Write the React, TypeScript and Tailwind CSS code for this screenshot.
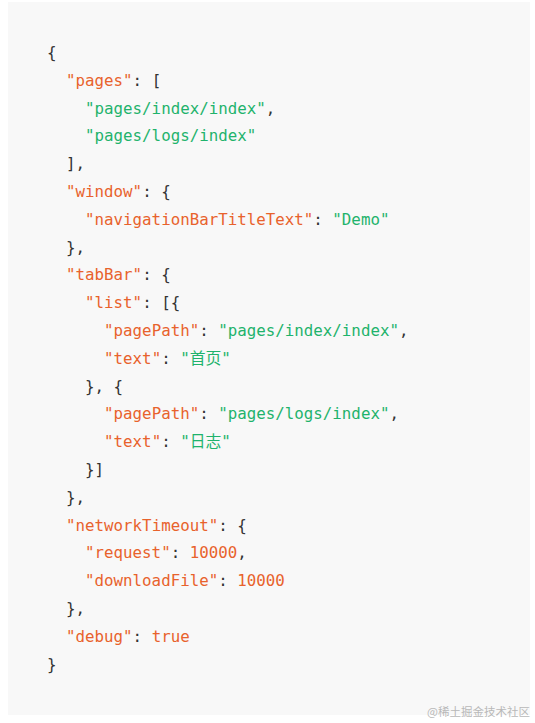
import React from 'react';

type Tok = [string, 'k' | 's' | 'p' | 'n'];

const lines: Tok[][] = [
  [['{', 'p']],
  [['  ', 'p'], ['"pages"', 'k'], [': [', 'p']],
  [['    ', 'p'], ['"pages/index/index"', 's'], [',', 'p']],
  [['    ', 'p'], ['"pages/logs/index"', 's']],
  [['  ],', 'p']],
  [['  ', 'p'], ['"window"', 'k'], [': {', 'p']],
  [['    ', 'p'], ['"navigationBarTitleText"', 'k'], [': ', 'p'], ['"Demo"', 's']],
  [['  },', 'p']],
  [['  ', 'p'], ['"tabBar"', 'k'], [': {', 'p']],
  [['    ', 'p'], ['"list"', 'k'], [': [{', 'p']],
  [['      ', 'p'], ['"pagePath"', 'k'], [': ', 'p'], ['"pages/index/index"', 's'], [',', 'p']],
  [['      ', 'p'], ['"text"', 'k'], [': ', 'p'], ['"首页"', 's']],
  [['    }, {', 'p']],
  [['      ', 'p'], ['"pagePath"', 'k'], [': ', 'p'], ['"pages/logs/index"', 's'], [',', 'p']],
  [['      ', 'p'], ['"text"', 'k'], [': ', 'p'], ['"日志"', 's']],
  [['    }]', 'p']],
  [['  },', 'p']],
  [['  ', 'p'], ['"networkTimeout"', 'k'], [': {', 'p']],
  [['    ', 'p'], ['"request"', 'k'], [': ', 'p'], ['10000', 'n'], [',', 'p']],
  [['    ', 'p'], ['"downloadFile"', 'k'], [': ', 'p'], ['10000', 'n']],
  [['  },', 'p']],
  [['  ', 'p'], ['"debug"', 'k'], [': ', 'p'], ['true', 'n']],
  [['}', 'p']],
];

const color = {
  k: 'text-[#e8622c]',
  s: 'text-[#1fb36c]',
  n: 'text-[#e8622c]',
  p: 'text-[#333333]',
};

export default function App() {
  return (
    <div className="w-[535px] h-[723px] bg-white pt-[2px] pl-[8px] pr-[5px]">
      <div className="relative h-[713px] bg-[#f8f8f8] pt-[37px] pl-[39px]">
        <pre
          className="m-0 text-[15.8px] leading-[27.8px]"
          style={{ fontFamily: '"DejaVu Sans Mono", "Noto Sans CJK SC", monospace' }}
        >
          {lines.map((line, i) => (
            <div key={i}>
              {line.map(([t, c], j) => (
                <span key={j} className={color[c]}>{t}</span>
              ))}
            </div>
          ))}
        </pre>
        <div
          className="absolute right-[0px] bottom-[-5px] text-[11.5px] text-[#b8b8b8]"
          style={{ fontFamily: '"Noto Sans CJK SC", sans-serif' }}
        >
          @稀土掘金技术社区
        </div>
      </div>
    </div>
  );
}
